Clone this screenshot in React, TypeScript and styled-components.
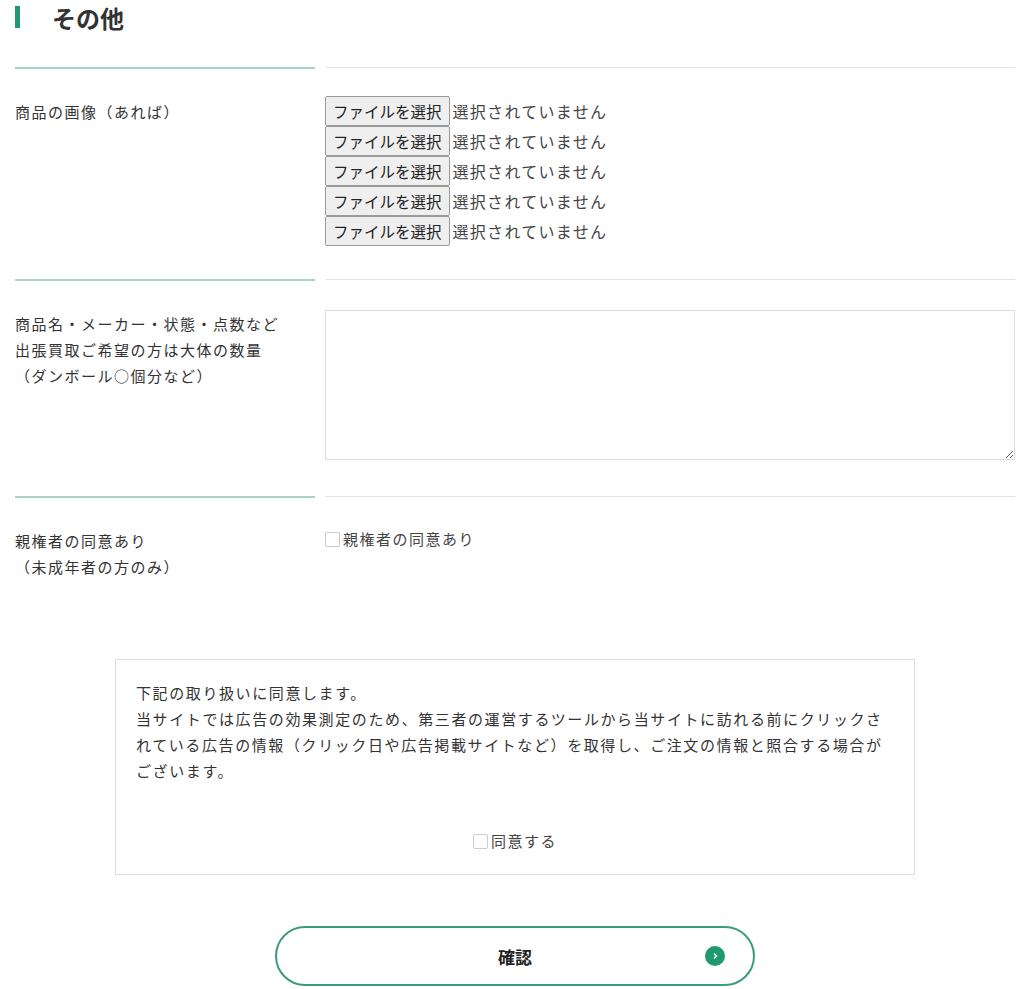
import styled, { createGlobalStyle } from "styled-components";

const Global = createGlobalStyle`
  body {
    margin: 0;
    background: #fff;
    font-family: "Noto Sans CJK JP", "Noto Sans", sans-serif;
    color: #333;
  }
`;

const Page = styled.div`
  padding: 0 9px 0 15px;
  width: 1000px;
`;

const Heading = styled.h2`
  margin: 0;
  height: 34px;
  display: flex;
  align-items: center;
  font-size: 24px;
  font-weight: 700;
  color: #333;
  &::before {
    content: "";
    width: 5px;
    height: 22px;
    background: #1f9a70;
    margin-right: 32px;
  }
`;

const Row = styled.div<{ $h: number }>`
  display: grid;
  grid-template-columns: 300px 690px;
  column-gap: 10px;
  margin-top: 33px;
  min-height: ${(p) => p.$h}px;
`;

const Label = styled.div`
  border-top: 2px solid #a9d3c6;
  padding-top: 30px;
  font-size: 15px;
  line-height: 26px;
  letter-spacing: 1.5px;
`;

const Field = styled.div<{ $pt?: number }>`
  border-top: 1px solid #e3e3e3;
  padding-top: ${(p) => p.$pt ?? 28}px;
`;

const FileList = styled.div`
  display: flex;
  flex-direction: column;
`;

const FileRow = styled.div`
  display: flex;
  align-items: center;
  height: 30px;
  font-size: 16px;
  letter-spacing: 1.3px;
  color: #444;
  gap: 3px;
`;

const FileButton = styled.span`
  display: inline-flex;
  align-items: center;
  height: 28px;
  padding: 0 7px;
  background: #efefef;
  border: 1px solid #9a9a9a;
  border-radius: 2px;
  color: #222;
  font-size: 15.5px;
  letter-spacing: 0;
`;

const TextArea = styled.textarea`
  display: block;
  width: 690px;
  height: 150px;
  box-sizing: border-box;
  border: 1px solid #ddd;
  margin-top: 2px;
  resize: vertical;
`;

const Check = styled.label`
  display: flex;
  align-items: center;
  gap: 3px;
  font-size: 15px;
  letter-spacing: 1.5px;
  line-height: 26px;
  color: #444;
  &::before {
    content: "";
    width: 13px;
    height: 13px;
    border: 1px solid #ccc;
    border-radius: 2px;
  }
`;

const Consent = styled.div`
  margin: 79px auto 0;
  width: 800px;
  box-sizing: border-box;
  border: 1px solid #ddd;
  padding: 20px 20px 20px;
  font-size: 15px;
  line-height: 26px;
  letter-spacing: 1.6px;
  display: flex;
  flex-direction: column;
  gap: 44px;
`;

const CenterCheck = styled(Check)`
  justify-content: center;
`;

const Submit = styled.button`
  margin: 51px auto 12px;
  display: flex;
  align-items: center;
  justify-content: center;
  position: relative;
  width: 480px;
  height: 60px;
  border: 2px solid #3a9c7c;
  border-radius: 30px;
  background: #fff;
  font-family: inherit;
  font-size: 17px;
  font-weight: 700;
  color: #222;
`;

const Arrow = styled.span`
  position: absolute;
  right: 28px;
  top: 50%;
  margin-top: -10px;
  width: 20px;
  height: 20px;
  border-radius: 50%;
  background: #1f9a70;
  display: flex;
  align-items: center;
  justify-content: center;
`;

export default function App() {
  return (
    <Page>
      <Global />
      <Heading>その他</Heading>
      <Row $h={177}>
        <Label>商品の画像（あれば）</Label>
        <Field>
          <FileList>
            {[0, 1, 2, 3, 4].map((i) => (
              <FileRow key={i}>
                <FileButton>ファイルを選択</FileButton>
                選択されていません
              </FileRow>
            ))}
          </FileList>
        </Field>
      </Row>
      <Row $h={184}>
        <Label>
          商品名・メーカー・状態・点数など
          <br />
          出張買取ご希望の方は大体の数量
          <br />
          （ダンボール○個分など）
        </Label>
        <Field>
          <TextArea />
        </Field>
      </Row>
      <Row $h={70}>
        <Label>
          親権者の同意あり
          <br />
          （未成年者の方のみ）
        </Label>
        <Field $pt={29}>
          <Check>親権者の同意あり</Check>
        </Field>
      </Row>
      <Consent>
        <div>
          下記の取り扱いに同意します。
          <br />
          当サイトでは広告の効果測定のため、第三者の運営するツールから当サイトに訪れる前にクリックされている広告の情報（クリック日や広告掲載サイトなど）を取得し、ご注文の情報と照合する場合がございます。
        </div>
        <CenterCheck>同意する</CenterCheck>
      </Consent>
      <Submit>
        確認
        <Arrow>
          <svg width="8" height="8" viewBox="0 0 8 8">
            <path d="M3 1.5 L5.5 4 L3 6.5" stroke="#fff" strokeWidth="1.4" fill="none" />
          </svg>
        </Arrow>
      </Submit>
    </Page>
  );
}
